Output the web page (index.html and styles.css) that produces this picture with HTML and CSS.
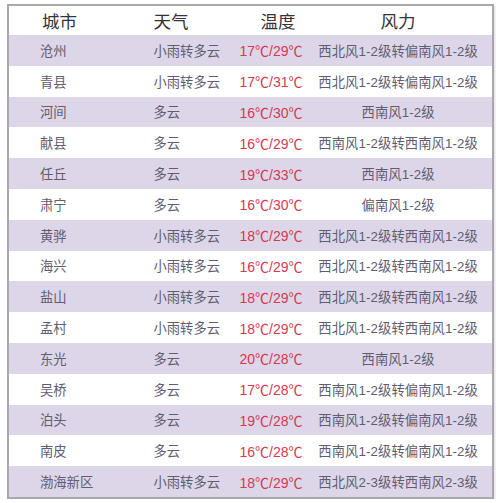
FILE: index.html
```html
<!DOCTYPE html>
<html lang="zh">
<head>
<meta charset="utf-8">
<link rel="stylesheet" href="styles.css">
</head>
<body>
<div class="frame">
<table class="weather">
<colgroup><col class="c1"><col class="c2"><col class="c3"><col class="c4"></colgroup>
<thead>
<tr><th class="city">城市</th><th class="sky">天气</th><th class="temp-h">温度</th><th class="wind">风力</th></tr>
</thead>
<tbody>
<tr class="alt"><td class="city">沧州</td><td class="sky">小雨转多云</td><td class="temp">17℃/29℃</td><td class="wind">西北风1-2级转偏南风1-2级</td></tr>
<tr><td class="city">青县</td><td class="sky">小雨转多云</td><td class="temp">17℃/31℃</td><td class="wind">西北风1-2级转偏南风1-2级</td></tr>
<tr class="alt"><td class="city">河间</td><td class="sky">多云</td><td class="temp">16℃/30℃</td><td class="wind">西南风1-2级</td></tr>
<tr><td class="city">献县</td><td class="sky">多云</td><td class="temp">16℃/29℃</td><td class="wind">西南风1-2级转西南风1-2级</td></tr>
<tr class="alt"><td class="city">任丘</td><td class="sky">多云</td><td class="temp">19℃/33℃</td><td class="wind">西南风1-2级</td></tr>
<tr><td class="city">肃宁</td><td class="sky">多云</td><td class="temp">16℃/30℃</td><td class="wind">偏南风1-2级</td></tr>
<tr class="alt"><td class="city">黄骅</td><td class="sky">小雨转多云</td><td class="temp">18℃/29℃</td><td class="wind">西北风1-2级转西南风1-2级</td></tr>
<tr><td class="city">海兴</td><td class="sky">小雨转多云</td><td class="temp">16℃/29℃</td><td class="wind">西北风1-2级转西南风1-2级</td></tr>
<tr class="alt"><td class="city">盐山</td><td class="sky">小雨转多云</td><td class="temp">18℃/29℃</td><td class="wind">西北风1-2级转西南风1-2级</td></tr>
<tr><td class="city">孟村</td><td class="sky">小雨转多云</td><td class="temp">18℃/29℃</td><td class="wind">西北风1-2级转西南风1-2级</td></tr>
<tr class="alt"><td class="city">东光</td><td class="sky">多云</td><td class="temp">20℃/28℃</td><td class="wind">西南风1-2级</td></tr>
<tr><td class="city">吴桥</td><td class="sky">多云</td><td class="temp">17℃/28℃</td><td class="wind">西南风1-2级转偏南风1-2级</td></tr>
<tr class="alt"><td class="city">泊头</td><td class="sky">多云</td><td class="temp">19℃/28℃</td><td class="wind">西南风1-2级转偏南风1-2级</td></tr>
<tr><td class="city">南皮</td><td class="sky">多云</td><td class="temp">16℃/28℃</td><td class="wind">西南风1-2级转偏南风1-2级</td></tr>
<tr class="alt"><td class="city">渤海新区</td><td class="sky">小雨转多云</td><td class="temp">18℃/29℃</td><td class="wind">西北风2-3级转西南风2-3级</td></tr>
</tbody>
</table>
</div>
</body>
</html>
```

FILE: styles.css
```css
html, body {
  margin: 0;
  padding: 0;
  background: #ffffff;
}
body {
  font-family: "Liberation Sans", "Noto Sans CJK SC", sans-serif;
}
.frame {
  padding: 4px 0 0 7px;
}
.weather {
  width: 487px;
  border-collapse: collapse;
  table-layout: fixed;
  border: 2px solid #a9a9ad;
  box-shadow: 1px 1px 2px rgba(0,0,0,0.15);
}
.c1 { width: 131px; }
.c2 { width: 98px; }
.c3 { width: 66px; }
.c4 { width: 188px; }
th, td {
  padding: 0;
  white-space: nowrap;
  overflow: visible;
}
th {
  height: 29px;
  font-size: 17.5px;
  font-weight: normal;
  color: #35323c;
  text-align: left;
}
td {
  height: 30.8px;
  font-size: 13.3px;
  color: #625c70;
}
tr.alt td {
  background: #dcd6e8;
}
.city { padding-left: 31px; }
.sky { padding-left: 14px; }
th.city { padding-left: 33px; }
th.sky { padding-left: 14px; }
.temp-h {
  text-align: center;
  padding-left: 14px;
}
.temp {
  text-align: center;
  color: #d6394f;
  font-size: 14px;
}
.wind {
  text-align: center;
  letter-spacing: 0.1px;
}
th.wind {
  text-align: center;
  letter-spacing: 0;
}
```
